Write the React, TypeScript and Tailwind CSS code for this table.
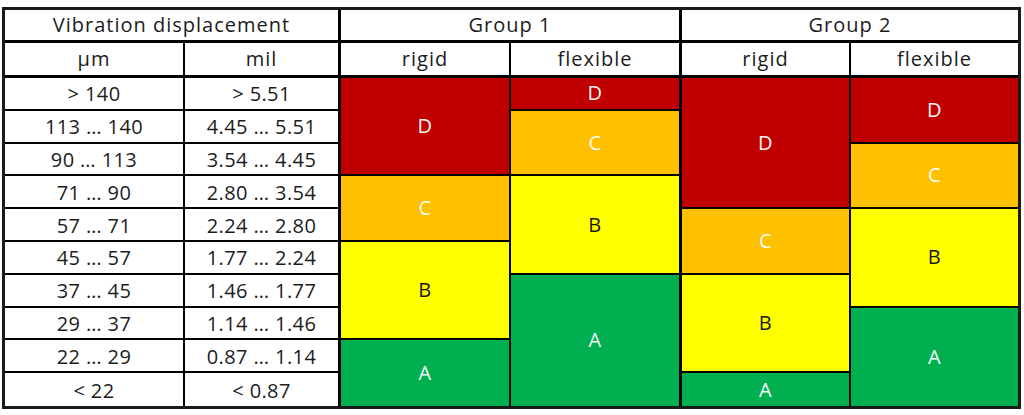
import React from "react";

const rows: [string, string][] = [
  ["> 140", "> 5.51"],
  ["113 … 140", "4.45 … 5.51"],
  ["90 … 113", "3.54 … 4.45"],
  ["71 … 90", "2.80 … 3.54"],
  ["57 … 71", "2.24 … 2.80"],
  ["45 … 57", "1.77 … 2.24"],
  ["37 … 45", "1.46 … 1.77"],
  ["29 … 37", "1.14 … 1.46"],
  ["22 … 29", "0.87 … 1.14"],
  ["< 22", "< 0.87"],
];

const COLORS: Record<string, string> = {
  D: "bg-[#c00000] text-[#f6f6f6]",
  C: "bg-[#ffc000] text-[#fdfbf2]",
  B: "bg-[#ffff00] text-[#1a1a1a]",
  A: "bg-[#00b050] text-[#f6f6f6]",
};

type Block = { l: string; pos: string; last?: boolean };

const blocks: Block[] = [
  // Group 1 rigid (col 3)
  { l: "D", pos: "[grid-column:3] [grid-row:3/span_3] border-r-2" },
  { l: "C", pos: "[grid-column:3] [grid-row:6/span_2] border-r-2" },
  { l: "B", pos: "[grid-column:3] [grid-row:8/span_3] border-r-2" },
  { l: "A", pos: "[grid-column:3] [grid-row:11/span_2] border-r-2", last: true },
  // Group 1 flexible (col 4)
  { l: "D", pos: "[grid-column:4] [grid-row:3/span_1] border-r-[3px]" },
  { l: "C", pos: "[grid-column:4] [grid-row:4/span_2] border-r-[3px]" },
  { l: "B", pos: "[grid-column:4] [grid-row:6/span_3] border-r-[3px]" },
  { l: "A", pos: "[grid-column:4] [grid-row:9/span_4] border-r-[3px]", last: true },
  // Group 2 rigid (col 5)
  { l: "D", pos: "[grid-column:5] [grid-row:3/span_4] border-r-2" },
  { l: "C", pos: "[grid-column:5] [grid-row:7/span_2] border-r-2" },
  { l: "B", pos: "[grid-column:5] [grid-row:9/span_3] border-r-2" },
  { l: "A", pos: "[grid-column:5] [grid-row:12/span_1] border-r-2", last: true },
  // Group 2 flexible (col 6)
  { l: "D", pos: "[grid-column:6] [grid-row:3/span_2]" },
  { l: "C", pos: "[grid-column:6] [grid-row:5/span_2]" },
  { l: "B", pos: "[grid-column:6] [grid-row:7/span_3]" },
  { l: "A", pos: "[grid-column:6] [grid-row:10/span_3]", last: true },
];

const cell = "flex items-center justify-center border-black";
const head = "flex items-center justify-center border-black tracking-[1px]";

export default function App() {
  return (
    <div
      className="w-[1024px] h-[415px] bg-white pt-[7px] pl-[2px] text-[#1c1c1c]"
      style={{ fontFamily: "'Open Sans', Lato, sans-serif" }}
    >
      <div className="grid grid-cols-[180px_156px_170px_171px_169px_167px] grid-rows-[33px_35px_repeat(10,minmax(0,1fr))] w-[1019px] h-[402px] border-[3px] border-[#1a1a1a] text-[20px] leading-none tracking-[0.4px]">
        <div className={`${head} [grid-column:1/span_2] border-r-[3px] border-b-[3px]`}>
          Vibration displacement
        </div>
        <div className={`${head} [grid-column:3/span_2] border-r-[3px] border-b-[3px]`}>Group 1</div>
        <div className={`${head} [grid-column:5/span_2] border-b-[3px]`}>Group 2</div>

        <div className={`${head} border-r-2 border-b-[3px]`}>µm</div>
        <div className={`${head} border-r-[3px] border-b-[3px]`}>mil</div>
        <div className={`${head} border-r-2 border-b-[3px]`}>rigid</div>
        <div className={`${head} border-r-[3px] border-b-[3px]`}>flexible</div>
        <div className={`${head} border-r-2 border-b-[3px]`}>rigid</div>
        <div className={`${head} border-b-[3px]`}>flexible</div>

        {rows.map(([um, mil], i) => (
          <React.Fragment key={i}>
            <div
              className={`${cell} pt-[2px] [grid-column:1] border-r-2 ${i < 9 ? "border-b-2" : ""}`}
              style={{ gridRow: i + 3 }}
            >
              {um}
            </div>
            <div
              className={`${cell} pt-[2px] [grid-column:2] border-r-[3px] ${i < 9 ? "border-b-2" : ""}`}
              style={{ gridRow: i + 3 }}
            >
              {mil}
            </div>
          </React.Fragment>
        ))}

        {blocks.map((b, i) => (
          <div
            key={i}
            className={`${cell} ${b.pos} ${b.last ? "" : "border-b-2"} ${COLORS[b.l]}`}
          >
            {b.l}
          </div>
        ))}
      </div>
    </div>
  );
}
